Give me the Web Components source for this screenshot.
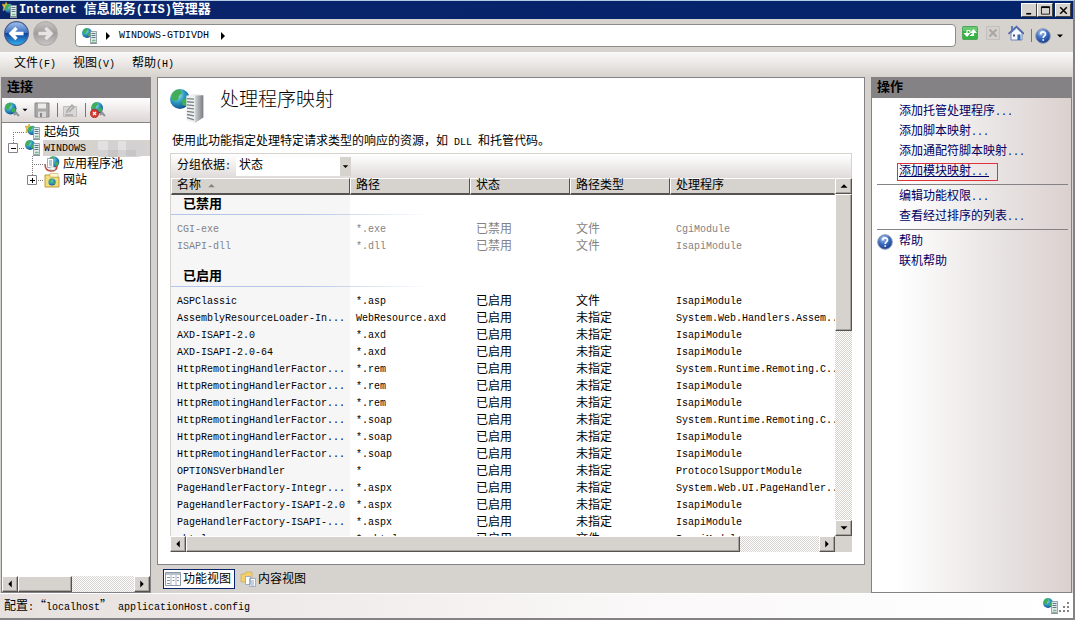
<!DOCTYPE html>
<html lang="zh-CN">
<head>
<meta charset="utf-8">
<title>Internet 信息服务(IIS)管理器</title>
<style>
html, body { margin: 0; height: 100%; }
body { font: 12px/16px "Liberation Mono", "Noto Sans CJK SC", monospace; color: #000; background: #d6d3ce; }
</style>
</head>
<body>
<iis-window></iis-window>
<script>
const BASE = `
  :host { display: block; box-sizing: border-box; }
  *, *::before, *::after { box-sizing: border-box; }
  button, select { font: inherit; color: inherit; margin: 0; padding: 0; border: 0; background: none; border-radius: 0; }
  .l { font-size: 10px; }
`;
function define(name, css, html, init) {
  const template = document.createElement('template');
  template.innerHTML = `<style>${BASE}${css}</style>`;
  customElements.define(name, class extends HTMLElement {
    constructor() {
      super();
      this.attachShadow({ mode: 'open' }).append(template.content.cloneNode(true));
    }
    connectedCallback() {
      if (this.ready) return;
      this.ready = true;
      const body = document.createElement('template');
      body.innerHTML = typeof html === 'function' ? html(this) : html;
      this.shadowRoot.append(body.content.cloneNode(true));
    }
  });
}

/* ---------- icons ---------- */
const GLOBE = `<radialGradient id="g" cx=".35" cy=".3" r=".8"><stop offset="0" stop-color="#bdf0f5"/><stop offset=".45" stop-color="#2f9fc4"/><stop offset="1" stop-color="#123f86"/></radialGradient>`;
const globe = (x, y, r) => `<g transform="translate(${x} ${y}) scale(${r / 5})"><circle r="5" fill="url(#g)"/><path d="M-4-2.5C-3-4.500-1-5 0-4.600L1-3-.5-1.500-1 .5-3 1-4.300 0ZM1 .5 3.500-.5 4.600 1 3 3.500 1.200 3Z" fill="#41ad56"/></g>`;
const tower = `<path d="M8.500 3.500h6v11h-6z" fill="#e4ebee" stroke="#7f9297" stroke-width=".8"/><path d="M9.500 5.500h4M9.500 7.500h4M9.500 9.500h4" stroke="#5a7b84"/><path d="M10 12.500h3.500" stroke="#74bb84" stroke-width="1.500"/><path d="M8 15.500h7" stroke="#8b989c"/>`;
const ICONS = {
  server: `<defs>${GLOBE}</defs>${globe(5, 5, 5)}${tower}`,
  start: `<defs>${GLOBE}</defs><path d="m4 0 1.500 2.500L9 2 7 5l1 3-4-1-3 2 .5-4L0 2l3 .5Z" fill="#f0c63c" stroke="#b58a1c" stroke-width=".5"/>${globe(7, 6.500, 4.500)}${tower}`,
  connect: `<defs>${GLOBE}</defs>${globe(6.500, 6.500, 6)}<path d="m11 10 4 4M10 13l3-3" stroke="#8a9499" stroke-width="2"/>`,
  disconnect: `<defs>${GLOBE}</defs>${globe(7, 6, 6)}<path d="m11 10 4 4M10 13l3-3" stroke="#8a9499" stroke-width="2"/><circle cx="4.500" cy="11.500" r="4.200" fill="#d63a2d" stroke="#9d1e1a" stroke-width=".6"/><path d="m3 10 3 3m0-3-3 3" stroke="#fff" stroke-width="1.300"/>`,
  save: `<path d="M1 1h14v14H1z" fill="#aaa7a7" stroke="#8d8a8a"/><path d="M4 1.500h8v5H4z" fill="#ebe9e9"/><path d="M4 9.500h8V15H4z" fill="#d9d7d7"/><path d="M6 11h2v4H6z" fill="#888"/>`,
  edit: `<path d="M1.500 4.500h13v10h-13z" fill="#d9d7d7" stroke="#c0bdbd"/><path d="M5 11V9l5-6 2 2-5 5M3 13h8" stroke="#aaa7a7" stroke-width="1.500" fill="none"/>`,
  pools: `<defs>${GLOBE}</defs>${globe(9.500, 6, 5.800)}<path d="M3.500 2.500h6v9h-6z" fill="#fff" stroke="#7b8b91" stroke-width=".7"/><path d="M5 5h3M5 7h3M5 9h3" stroke="#69a"/><path d="M1 8c0 5 2 7 6 7s6-2 6-5" fill="none" stroke="#c0493b" stroke-width="1.500"/><path d="M6 11h5v3H6z" fill="#fff" stroke="#9aa" stroke-width=".6"/>`,
  sites: `<defs>${GLOBE}</defs><path d="M1 3h5l1.500 2H15v10H1z" fill="#f3dc80" stroke="#bc9a3b"/><path d="M6 1.500h8V5H6z" fill="#fff7d0" stroke="#c9ae5c" stroke-width=".6"/>${globe(8, 10, 3.600)}`,
  refresh: `<rect x=".5" y="1.500" width="15" height="13" rx="1" fill="#35b345" stroke="#4fa35a"/><path d="M1 2h14v4H1z" fill="#8bdb8f" opacity=".6"/><path d="M5 5.500v3M8 5.500v2M2.800 8.500h4.400L5 11ZM8 10.500h3.500v-3M9.300 7.500h4.400L11.500 5ZM5 5.500h3" fill="#fff" stroke="#fff" stroke-width="1.200"/>`,
  stop: `<path d="M1.500 1.500h13v13h-13z" fill="#d3d0cd" stroke="#c3c0bc"/><path d="m4.500 4.500 7 7m0-7-7 7" stroke="#a9a6a3" stroke-width="2"/>`,
  home: `<path d="M3 8v7h11V8L8.500 3Z" fill="#f4f8ff" stroke="#6b86bd"/><path d="M.5 9 8.500 1.500 16 9" fill="none" stroke="#4f63a8" stroke-width="1.600"/><path d="M3 1h2v4H3z" fill="#5c7ebb"/><path d="M9.500 9.500h3V15h-3z" fill="#3467ab"/><path d="M5 9.500h2v2H5z" fill="#547"/>`,
  help: `<radialGradient id="h" cx=".4" cy=".25" r=".8"><stop offset="0" stop-color="#a9c6f3"/><stop offset=".5" stop-color="#3c6cc0"/><stop offset="1" stop-color="#15367f"/></radialGradient><circle cx="8" cy="8" r="7.300" fill="url(#h)" stroke="#8696b4"/><path d="M5.500 6.500c0-3.500 5-3.500 5-.5 0 1.800-2.300 1.800-2.300 4M8.200 11.200v1.600" stroke="#fff" stroke-width="1.700" fill="none"/>`,
  features: `<path d="M.5 1.500h15v13H.5z" fill="#fff" stroke="#8d97a8"/><path d="M1 2h14v2H1z" fill="#b5bfcd"/><path d="M6 4v10M11 4v10" stroke="#a8b2c0"/><path d="M2 6.500h3M2 9.500h3M7.500 6.500h2M7.500 9.500h2M12 6.500h2M12 9.500h2M2 12.500h3" stroke="#8694a8"/>`,
  content: `<path d="M1 3h4l1-2h6v10H1z" fill="#f2cf6c" stroke="#d2a945" stroke-width=".7"/><path d="M5.500 5.500h5v8h-5zM9.500 7.500h6v8h-6z" fill="#fff" stroke="#8aa0c0" stroke-width=".8"/><path d="M11 10h3M11 12h3M11 14h3" stroke="#6a86b0" stroke-width=".8"/>`,
  back: `<linearGradient id="b" x2="0" y2="1"><stop offset="0" stop-color="#a5c3ec"/><stop offset=".48" stop-color="#3a6fc2"/><stop offset=".5" stop-color="#12429f"/><stop offset="1" stop-color="#35b3ee"/></linearGradient><circle cx="8" cy="8" r="7.600" fill="url(#b)" stroke="#47598a" stroke-width=".7"/><path d="M12.500 8H5M8 4.500 4.500 8 8 11.500" fill="none" stroke="#fff" stroke-width="2.200"/>`,
  forward: `<linearGradient id="f" x2="0" y2="1"><stop offset="0" stop-color="#c6c4c2"/><stop offset=".5" stop-color="#a09e9c"/><stop offset="1" stop-color="#c9c7c5"/></linearGradient><circle cx="8" cy="8" r="7.500" fill="url(#f)" stroke="#aaa8a6" stroke-width=".7"/><path d="M3.500 8H11M8 4.500 11.500 8 8 11.500" fill="none" stroke="#e6e4e2" stroke-width="2.200"/>`,
  feature: `<defs>${GLOBE}<linearGradient id="t"><stop offset="0" stop-color="#d3d5d7"/><stop offset="1" stop-color="#787c80"/></linearGradient></defs>${globe(4.700, 4.700, 4.700)}<path d="m7.700 3.200 4-1 4 .7v10.500l-4 2.600-4-1.300Z" fill="#eef0f1"/><path d="m11.700 3 4-.1v10.500l-4 2.600Z" fill="url(#t)"/><path d="m8 4.500 3.300.3M8 6l3.300.3M8 7.500l3.300.3M8 9l3.300.3M8 10.500l3.300.5M8 12l3.300.6M8 13.500l3.300 1" stroke="#7c8185" stroke-width=".6"/>`,
  right: `<path d="M6 4v8l4-4z"/>`, left: `<path d="M10 4v8L6 8z"/>`,
  up: `<path d="M4 10h8L8 6z"/>`, down: `<path d="M4 6h8l-4 4z"/>`,
  min: `<path d="M4 11h6v2H4z"/>`,
  max: `<path d="M3 3.500h10v9H3z" fill="none" stroke="#000"/><path d="M3 4h10" stroke="#000" stroke-width="2"/>`,
  close: `<path d="m4 4 8 8m0-8-8 8" stroke="#000" stroke-width="1.800"/>`
};
define('iis-icon', `
  :host { display: inline-block; width: var(--icon, 16px); height: var(--icon, 16px); flex: none; }
  svg { display: block; width: 100%; height: 100%; }
`, el => `<svg viewBox="0 0 16 16" aria-hidden="true">${ICONS[el.getAttribute('name')]}</svg>`);

/* ---------- scroll bar ---------- */
define('iis-scrollbar', `
  :host { display: flex; background: repeating-conic-gradient(#fff 0 25%, #d6d3ce 0 50%) 0 0 / 2px 2px; }
  :host([vertical]) { flex-direction: column; }
  button { flex: none; width: 16px; height: 16px; }
  :host([vertical]) button { width: auto; }
  button, .thumb { background: #d6d3ce; border: 1px solid; border-color: #fff #55534f #55534f #fff; box-shadow: inset -1px -1px #a5a29d; }
  iis-icon { --icon: 14px; }
  .thumb { flex: var(--thumb) 0 0; }
  .track { flex: var(--track) 0 0; }
`, el => {
  const v = el.hasAttribute('vertical');
  return `<button aria-label="${v ? '向上' : '向左'}"><iis-icon name="${v ? 'up' : 'left'}"></iis-icon></button>
  <div class="thumb"></div><div class="track"></div>
  <button aria-label="${v ? '向下' : '向右'}"><iis-icon name="${v ? 'down' : 'right'}"></iis-icon></button>`;
});

/* ---------- window chrome ---------- */
define('iis-titlebar', `
  :host { display: flex; align-items: center; height: 18px; padding: 0 2px 0 2px; background: linear-gradient(90deg, #0a246a, #04246c); color: #fff; }
  h1 { flex: 1; margin: 0 0 0 1px; font-size: 13px; line-height: 18px; font-weight: bold; }
  .l { font-size: 12px; }
  button { width: 16px; height: 14px; background: #d6d3ce; border: 1px solid; border-color: #fff #444 #444 #fff; display: grid; place-items: center; }
  button:last-child { margin-left: 2px; }
  button iis-icon { --icon: 13px; }
`, `<iis-icon name="start"></iis-icon><h1><span class="l">Internet </span>信息服务<span class="l">(IIS)</span>管理器</h1>
<button aria-label="最小化"><iis-icon name="min"></iis-icon></button><button aria-label="最大化"><iis-icon name="max"></iis-icon></button><button aria-label="关闭"><iis-icon name="close"></iis-icon></button>`);

define('iis-navbar', `
  :host { display: flex; align-items: center; height: 33px; padding: 0 7px 0 4px; }
  button { display: block; }
  .round { --icon: 25px; margin-right: 4px; }
  nav { flex: 1; display: flex; align-items: center; height: 23px; margin: 0 6px 0 13px; padding-left: 6px; background: #fff; border: 1px solid #8d8b88; border-radius: 4px; font-size: 10px; }
  nav iis-icon[name=right] { margin: 0 3px 0 2px; }
  nav a + iis-icon[name=right] { margin-left: 6px; }
  a { color: inherit; text-decoration: none; }
  .tools { display: flex; align-items: center; gap: 7px; }
  .tools i { width: 1px; height: 13px; background: #777; }
  .help { display: flex; align-items: center; margin-left: -4px; }
  .caret { --icon: 12px; margin-left: 3px; }
`, `<button class="round" aria-label="后退"><iis-icon name="back"></iis-icon></button><button class="round" aria-label="前进"><iis-icon name="forward"></iis-icon></button>
<nav><iis-icon name="server"></iis-icon><iis-icon name="right"></iis-icon><a href="#server">WINDOWS-GTDIVDH</a><iis-icon name="right"></iis-icon></nav>
<div class="tools"><button aria-label="刷新"><iis-icon name="refresh"></iis-icon></button><button aria-label="停止"><iis-icon name="stop"></iis-icon></button><button aria-label="主页"><iis-icon name="home"></iis-icon></button><i></i><button class="help" aria-label="帮助"><iis-icon name="help"></iis-icon><iis-icon class="caret" name="down"></iis-icon></button></div>`);

define('iis-menubar', `
  :host { display: flex; gap: 17px; height: 25px; padding: 0 14px; background: linear-gradient(#fbf9f9, #dedad6 80%, #d6d3ce); }
`, `<button>文件<span class="l">(F)</span></button><button>视图<span class="l">(V)</span></button><button>帮助<span class="l">(H)</span></button>`);

define('iis-panel-title', `
  :host { background: #848284; height: 20px; flex: none; padding-left: 5px; font-size: 13px; line-height: 20px; font-weight: bold; }
`, `<slot></slot>`);

/* ---------- connections ---------- */
define('iis-tree-item', `
  :host { display: flex; align-items: flex-start; height: 16px; }
  svg { flex: none; display: block; }
  a { color: inherit; text-decoration: none; margin-left: 2px; padding: 1px 0 0 1px; white-space: nowrap; }
  :host([selected]) a { flex: 1; display: flex; align-items: center; background: #d6d3ce; font-size: 10px; height: 16px; }
  .mask { margin-left: 4px; }
`, el => {
  const w = +el.getAttribute('indent'), box = el.getAttribute('box'), x = w - 12;
  const sel = el.hasAttribute('selected');
  const up = el.hasAttribute('first') ? 8 : 0, down = el.hasAttribute('last') ? 8 : 16;
  return `<svg width="${w}" height="16"><g stroke="#777" stroke-dasharray="1 1"><path d="M${x + .5} ${up}V${down}"/><path d="M${x} 8.500H${w}"/></g>${box ? `<path d="M${x - 4.500} 3.500h9v9h-9z" fill="#fff" stroke="#848284"/><path d="M${x - 2} 8.500h5${box === 'plus' ? `M${x + .5} 6v5` : ''}" stroke="#000"/>` : ''}</svg>
  <iis-icon name="${el.getAttribute('icon')}"></iis-icon><a href="#${el.getAttribute('icon')}"><slot></slot>${sel ? `<svg class="mask" width="58" height="18"><path d="M6 1h40q10 0 12 8-2 8-12 8H10Q0 15 6 1z" fill="#d3d1d1"/><path d="M8 1h10v9H8zM28 1h8v9h-8z" fill="#e2e1e1"/><path d="M18 10h10v7H18zM36 10h10v6H36z" fill="#c7c5c5"/></svg>` : ''}</a>`;
});

define('iis-connections', `
  :host { display: flex; flex-direction: column; background: #fff; border: 1px solid #848284; min-width: 0; }
  .tools { display: flex; align-items: center; height: 25px; padding-left: 2px; background: linear-gradient(#fff, #dcd6d4); border-bottom: 1px solid #848284; }
  .tools button { display: flex; align-items: center; }
  .caret { --icon: 10px; margin-right: 4px; }
  i { width: 1px; height: 14px; background: #777; margin: 0 4px 0 7px; }
  .tree { flex: 1; overflow: hidden; padding-top: 1px; }
  iis-scrollbar { --thumb: 53; --track: 63; }
`, `<iis-panel-title>连接</iis-panel-title>
<div class="tools"><button aria-label="连接到"><iis-icon name="connect"></iis-icon><iis-icon class="caret" name="down"></iis-icon></button><button aria-label="保存"><iis-icon name="save"></iis-icon></button><i></i><button aria-label="重命名"><iis-icon name="edit"></iis-icon></button><i></i><button aria-label="断开"><iis-icon name="disconnect"></iis-icon></button></div>
<div class="tree">
<iis-tree-item indent="23" icon="start" first>起始页</iis-tree-item>
<iis-tree-item indent="23" icon="server" box="minus" selected last>WINDOWS</iis-tree-item>
<iis-tree-item indent="42" icon="pools">应用程序池</iis-tree-item>
<iis-tree-item indent="42" icon="sites" box="plus" last>网站</iis-tree-item>
</div>
<iis-scrollbar></iis-scrollbar>`);

/* ---------- handler mappings ---------- */
const ROWS = [
  { group: '已禁用' },
  ['CGI-exe', '*.exe', '已禁用', '文件', 'CgiModule'],
  ['ISAPI-dll', '*.dll', '已禁用', '文件', 'IsapiModule'],
  { group: '已启用' },
  ['ASPClassic', '*.asp', '已启用', '文件', 'IsapiModule'],
  ['AssemblyResourceLoader-In...', 'WebResource.axd', '已启用', '未指定', 'System.Web.Handlers.Assem..'],
  ['AXD-ISAPI-2.0', '*.axd', '已启用', '未指定', 'IsapiModule'],
  ['AXD-ISAPI-2.0-64', '*.axd', '已启用', '未指定', 'IsapiModule'],
  ['HttpRemotingHandlerFactor...', '*.rem', '已启用', '未指定', 'System.Runtime.Remoting.C..'],
  ['HttpRemotingHandlerFactor...', '*.rem', '已启用', '未指定', 'IsapiModule'],
  ['HttpRemotingHandlerFactor...', '*.rem', '已启用', '未指定', 'IsapiModule'],
  ['HttpRemotingHandlerFactor...', '*.soap', '已启用', '未指定', 'System.Runtime.Remoting.C..'],
  ['HttpRemotingHandlerFactor...', '*.soap', '已启用', '未指定', 'IsapiModule'],
  ['HttpRemotingHandlerFactor...', '*.soap', '已启用', '未指定', 'IsapiModule'],
  ['OPTIONSVerbHandler', '*', '已启用', '未指定', 'ProtocolSupportModule'],
  ['PageHandlerFactory-Integr...', '*.aspx', '已启用', '未指定', 'System.Web.UI.PageHandler..'],
  ['PageHandlerFactory-ISAPI-2.0', '*.aspx', '已启用', '未指定', 'IsapiModule'],
  ['PageHandlerFactory-ISAPI-...', '*.aspx', '已启用', '未指定', 'IsapiModule'],
  ['shtml', '*.shtml', '已启用', '文件', 'IsapiModule']
];
define('iis-handler-table', `
  :host { display: block; min-width: 0; min-height: 0; overflow-x: visible; overflow-y: clip; border-left: 1px solid #d6d3ce; background: linear-gradient(90deg, #f6f6f6 179px, #fff 179px); }
  table { width: 100%; table-layout: fixed; border-collapse: separate; border-spacing: 0; }
  th, td { height: 17px; line-height: 16px; padding: 1px 0 0 6px; text-align: left; font-weight: normal; white-space: nowrap; vertical-align: middle; }
  thead th { background: #d6d3ce; line-height: 14px; border: solid; border-width: 1px 1px 2px 1px; border-color: #fff #55534f #55534f #fff; padding: 0 0 0 5px; }
  thead th:last-child { border-right-color: #d6d3ce; }
  thead iis-icon { --icon: 13px; fill: #848284; vertical-align: middle; margin-left: 4px; }
  td.l { line-height: 10px; padding-top: 0; }
  tr.off { color: #848284; }
  .group th { height: 38px; padding: 0 0 6px 12px; font-size: 13px; font-weight: bold; vertical-align: bottom; }
  .group:first-child th { height: 26px; }
  .group span { display: block; width: 260px; margin-left: -12px; padding: 0 0 1px 12px; background: linear-gradient(90deg, #b4c6e8 50%, #fff0) bottom / 100% 1px no-repeat; line-height: 18px; }
`, () => `<table><colgroup><col style="width:179px"><col style="width:120px"><col style="width:100px"><col style="width:100px"><col></colgroup>
<thead><tr><th>名称<iis-icon name="up"></iis-icon></th><th>路径</th><th>状态</th><th>路径类型</th><th>处理程序</th></tr></thead>
<tbody>${ROWS.map(r => r.group ? `<tr class="group"><th colspan="5"><span>${r.group}</span></th></tr>`
  : `<tr${r[2] === '已禁用' ? ' class="off"' : ''}>${r.map(c => `<td${/^[ -~]*$/.test(c) ? ' class="l"' : ''}>${c}</td>`).join('')}</tr>`).join('')}</tbody></table>`);

define('iis-feature', `
  :host { display: flex; flex-direction: column; min-height: 0; background: #fff; border: 1px solid #848284; padding: 11px 12px 12px; }
  header { display: flex; gap: 16px; height: 33px; }
  header iis-icon { --icon: 34px; }
  h2 { margin: 1px 0 0; font-size: 19px; line-height: 22px; font-weight: 300; }
  p { margin: 12px 0 2px 2px; line-height: 16px; }
  .bar { display: flex; align-items: center; gap: 5px; height: 25px; flex: none; padding: 1px 0 0 6px; border: 1px solid #d6d3ce; border-bottom: 0; background: linear-gradient(#fff, #e0dada); }
  .pick { display: grid; width: 115px; height: 19px; background: #fff; grid-template-columns: 1fr 11px; align-items: center; }
  select { appearance: none; grid-area: 1 / 1 / 2 / 3; width: 100%; height: 19px; padding-left: 3px; line-height: 19px; }
  .pick iis-icon { --icon: 11px; grid-area: 1 / 2; height: 19px; background: #d6d3ce; pointer-events: none; }
  .list { flex: 1; min-height: 0; display: grid; grid-template: minmax(0, 1fr) 16px / minmax(0, 1fr) 17px; background: #d6d3ce; }
  .v { --thumb: 135; --track: 190; } .h { --thumb: 552; --track: 79; }
`, `<header><iis-icon name="feature"></iis-icon><h2>处理程序映射</h2></header>
<p>使用此功能指定处理特定请求类型的响应的资源，如<span class="l"> DLL </span>和托管代码。</p>
<div class="bar"><label for="g">分组依据<span class="l">:</span></label><div class="pick"><select id="g"><option>状态</option><option>不进行分组</option></select><iis-icon name="down"></iis-icon></div></div>
<div class="list"><iis-handler-table></iis-handler-table><iis-scrollbar class="v" vertical></iis-scrollbar><iis-scrollbar class="h"></iis-scrollbar></div>`);

define('iis-view-tabs', `
  :host { display: flex; align-items: center; gap: 3px; height: 28px; padding-left: 6px; }
  button { display: flex; align-items: center; gap: 2px; height: 20px; padding: 0 3px 0 1px; border: 1px solid transparent; line-height: 18px; }
  [aria-selected=true] { background: #fff; border-color: #0a246a; }
  span { padding-top: 2px; }
`, `<button role="tab" aria-selected="true"><iis-icon name="features"></iis-icon><span>功能视图</span></button><button role="tab" aria-selected="false"><iis-icon name="content"></iis-icon><span>内容视图</span></button>`);

/* ---------- actions ---------- */
define('iis-action', `
  :host { display: flex; align-items: center; height: 20px; padding-left: 5px; }
  .slot { width: 16px; height: 16px; margin-right: 4px; }
  a { color: #000063; text-decoration: none; border: 1px solid transparent; padding: 1px 8px 0 1px; line-height: 15px; white-space: nowrap; }
  :host([marked]) a { border-color: #e0343c; text-decoration: underline; }
`, el => `<span class="slot">${el.hasAttribute('icon') ? `<iis-icon name="${el.getAttribute('icon')}"></iis-icon>` : ''}</span><a href="#action"><slot></slot>${el.hasAttribute('more') ? '<span class="l">...</span>' : ''}</a>`);
define('iis-actions', `
  :host { border: 1px solid #848284; background: linear-gradient(90deg, #fff 12%, #e6e1e0 68%, #dbd1cf); }
  div { padding-top: 4px; }
  hr { margin: 2px 3px 2px 5px; border: 0; height: 1px; background: #848284; }
`, `<iis-panel-title>操作</iis-panel-title><div>
<iis-action more>添加托管处理程序</iis-action><iis-action more>添加脚本映射</iis-action><iis-action more>添加通配符脚本映射</iis-action><iis-action more marked>添加模块映射</iis-action><hr>
<iis-action more>编辑功能权限</iis-action><iis-action more>查看经过排序的列表</iis-action><hr>
<iis-action icon="help">帮助</iis-action><iis-action>联机帮助</iis-action></div>`);

define('iis-statusbar', `
  :host { display: flex; align-items: center; height: 25px; padding: 0 2px 0 4px; border-top: 1px solid #fff; background: linear-gradient(90deg, #e6e0de, #faf8f8 60%, #fff); }
  span { white-space: pre; }
  .text { flex: 1; padding-top: 1px; }
  .q { font-family: "Noto Sans CJK SC", sans-serif; }
  svg { display: block; margin-top: 4px; }
`, `<span class="text">配置<span class="l">:</span><span class="q">“</span><span class="l">localhost</span><span class="q">”</span><span class="l"> applicationHost.config</span></span><iis-icon name="server"></iis-icon><svg width="12" height="12" fill="#848284"><path d="M8 0h2v2H8zM4 4h2v2H4zM8 4h2v2H8zM0 8h2v2H0zM4 8h2v2H4zM8 8h2v2H8z"/></svg>`);

define('iis-window', `
  :host { display: flex; flex-direction: column; height: 100vh; background: #d6d3ce; border: solid #848284; border-width: 1px 2px 2px 0; border-top-color: #b4cbe6; }
  main { flex: 1; min-height: 0; display: grid; grid-template-columns: 150px minmax(0, 1fr) 201px; gap: 6px; padding: 0 1px; }
  section { display: flex; flex-direction: column; min-height: 0; min-width: 0; }
  iis-feature { flex: 1; }
`, `<iis-titlebar></iis-titlebar><iis-navbar></iis-navbar><iis-menubar></iis-menubar>
<main><iis-connections></iis-connections><section><iis-feature></iis-feature><iis-view-tabs></iis-view-tabs></section><iis-actions></iis-actions></main>
<iis-statusbar></iis-statusbar>`);
</script>
</body>
</html>
